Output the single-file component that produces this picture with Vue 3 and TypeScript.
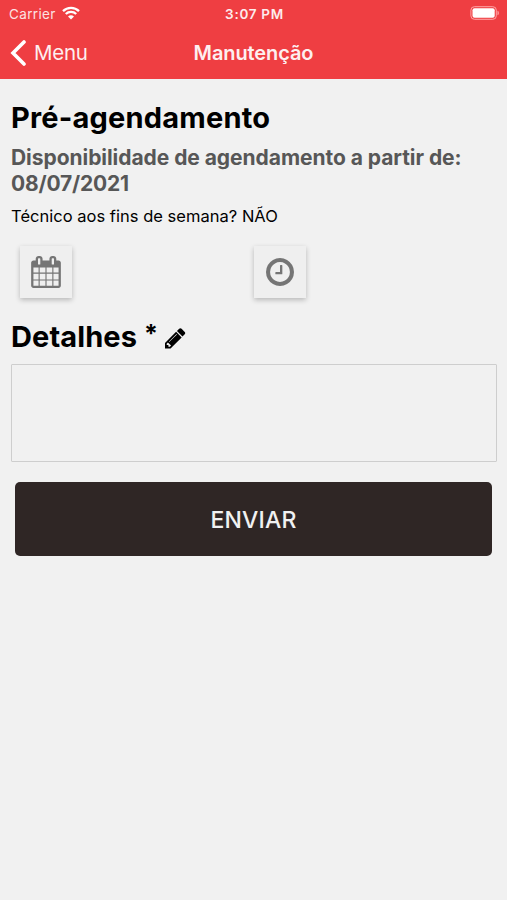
<script setup lang="ts">
import { ref } from 'vue'

const carrier = 'Carrier'
const time = '3:07 PM'
const availableFrom = '08/07/2021'
const weekendTechnician = 'NÃO'
const details = ref('')
</script>

<template>
  <div class="screen">
    <header class="header">
      <div class="status">
        <div class="status-left">
          <span class="carrier">{{ carrier }}</span>
          <svg class="wifi" viewBox="0 0 18 14" aria-hidden="true">
            <path d="M1 5.1a11.4 11.4 0 0 1 16 0" />
            <path d="M3.8 8a7.4 7.4 0 0 1 10.4 0" />
            <path class="wifi-dot" d="M9 13.6 6 10.6a4.3 4.3 0 0 1 6 0z" />
          </svg>
        </div>
        <span class="time">{{ time }}</span>
        <div class="status-right">
          <svg class="battery" viewBox="0 0 30 14" aria-hidden="true">
            <rect class="battery-case" x="0.9" y="0.7" width="25.4" height="12.6" rx="3.5" />
            <rect class="battery-level" x="2.5" y="2.3" width="22.2" height="9.4" rx="2" />
            <path class="battery-tip" d="M27.5 4.7c1.8.5 1.8 4.1 0 4.6z" />
          </svg>
        </div>
      </div>
      <nav class="nav">
        <button class="back" type="button">
          <svg class="chevron" viewBox="0 0 17 26" aria-hidden="true">
            <path d="M14 2 3 13l11 11" />
          </svg>
          <span class="back-label">Menu</span>
        </button>
        <h1 class="nav-title">Manutenção</h1>
      </nav>
    </header>

    <main class="content">
      <h2 class="heading"><span class="schedule-title">Pré-agendamento</span></h2>
      <p class="availability">
        <span class="availability-label">Disponibilidade de agendamento a partir de:</span><br />
        <span class="date">{{ availableFrom }}</span>
      </p>
      <p class="weekend">Técnico aos fins de semana? {{ weekendTechnician }}</p>

      <div class="pickers">
        <div class="picker">
          <button class="tile" type="button" aria-label="Data">
            <svg class="calendar" viewBox="0 0 1664 1792">
              <path d="M128 1664h288v-288h-288v288zm352 0h320v-288h-320v288zm-352-352h288v-320h-288v320zm352 0h320v-320h-320v320zm-352-384h288v-288h-288v288zm736 736h320v-288h-320v288zm-384-736h320v-288h-320v288zm768 736h288v-288h-288v288zm-384-352h320v-320h-320v320zm-352-864v-288q0-13-9.5-22.5t-22.5-9.5h-64q-13 0-22.5 9.5t-9.5 22.5v288q0 13 9.5 22.5t22.5 9.5h64q13 0 22.5-9.5t9.5-22.5zm736 864h288v-320h-288v320zm-384-384h320v-288h-320v288zm384 0h288v-288h-288v288zm32-480v-288q0-13-9.5-22.5t-22.5-9.5h-64q-13 0-22.5 9.5t-9.5 22.5v288q0 13 9.5 22.5t22.5 9.5h64q13 0 22.5-9.5t9.5-22.5zm384-64v1280q0 52-38 90t-90 38h-1408q-52 0-90-38t-38-90v-1280q0-52 38-90t90-38h128v-96q0-66 47-113t113-47h64q66 0 113 47t47 113v96h384v-96q0-66 47-113t113-47h64q66 0 113 47t47 113v96h128q52 0 90 38t38 90z" />
            </svg>
          </button>
        </div>
        <div class="picker">
          <button class="tile" type="button" aria-label="Hora">
            <svg class="clock" viewBox="128 128 1536 1536">
              <path d="M1024 544v448q0 14-9 23t-23 9h-320q-14 0-23-9t-9-23v-64q0-14 9-23t23-9h224v-352q0-14 9-23t23-9h64q14 0 23 9t9 23zm416 352q0-148-73-273t-198-198-273-73-273 73-198 198-73 273 73 273 198 198 273 73 273-73 198-198 73-273zm224 0q0 209-103 385.5t-279.5 279.5-385.5 103-385.5-103-279.5-279.5-103-385.5 103-385.5 279.5-279.5 385.5-103 385.5 103 279.5 279.5 103 385.5z" />
            </svg>
          </button>
        </div>
      </div>

      <h2 class="heading details-heading">
        <span class="details-title">Detalhes <span class="required">*</span></span>
        <svg class="pencil" viewBox="128 128 1536 1536" aria-hidden="true">
          <path d="M491 1536l91-91-235-235-91 91v107h128v128h107zm523-928q0-22-22-22-10 0-17 7l-542 542q-7 7-7 17 0 22 22 22 10 0 17-7l542-542q7-7 7-17zm-54-192l416 416-832 832h-416v-416zm683 96q0 53-37 90l-166 166-416-416 166-165q36-38 90-38 53 0 91 38l235 234q37 39 37 91z" />
        </svg>
      </h2>
      <textarea v-model="details" class="details" aria-label="Detalhes"></textarea>
      <button class="submit" type="button">ENVIAR</button>
    </main>
  </div>
</template>

<style>
body {
  background: #f1f1f1;
}
</style>

<style scoped>
.screen {
  min-height: 900px;
  background: #f1f1f1;
  color: #000;
  font-family: Inter, "Liberation Sans", sans-serif;
}

.screen * {
  box-sizing: border-box;
}

button {
  padding: 0;
  border: 0;
  font-family: inherit;
}

svg {
  display: block;
  flex: none;
}

h1,
h2,
p {
  margin: 0;
}

.header {
  height: 79px;
  background: #ef3e42;
  color: #fff;
}

.status {
  display: grid;
  grid-template-columns: 1fr auto 1fr;
  align-items: center;
  height: 27px;
  padding: 0 7px 0 9px;
}

.status-left {
  display: flex;
  align-items: center;
  gap: 6px;
}

.carrier {
  font-size: 13.5px;
  letter-spacing: 0.35px;
  line-height: 28px;
  opacity: 0.85;
}

.wifi {
  width: 18px;
  height: 14px;
  margin-top: -2px;
  fill: none;
  stroke: #fff;
  stroke-width: 2.3;
}

.wifi .wifi-dot {
  fill: #fff;
  stroke: none;
}

.time {
  font-size: 13.5px;
  font-weight: 600;
  letter-spacing: 0.7px;
  line-height: 28px;
  opacity: 0.9;
}

.status-right {
  display: flex;
  justify-content: flex-end;
}

.battery {
  width: 30px;
  height: 14px;
  margin-top: -2px;
}

.battery-case {
  fill: none;
  stroke: #ffa4a6;
  stroke-width: 1;
}

.battery-level {
  fill: #fff;
}

.battery-tip {
  fill: #ffa4a6;
}

.nav {
  display: grid;
  grid-template-columns: 1fr auto 1fr;
  align-items: center;
  height: 52px;
  padding: 0 10px;
}

.back {
  display: flex;
  align-items: center;
  gap: 7px;
  background: transparent;
  color: #fff;
}

.chevron {
  width: 17px;
  height: 26px;
  fill: none;
  stroke: #fff;
  stroke-width: 3.6;
  stroke-linecap: round;
}

.back-label {
  font-size: 20.5px;
  letter-spacing: -0.25px;
  line-height: 26px;
  opacity: 0.92;
}

.nav-title {
  font-size: 20px;
  font-weight: 600;
  letter-spacing: -0.1px;
  line-height: 26px;
  opacity: 0.92;
}

.content {
  padding: 20px 10px 0 11px;
}

.heading {
  height: 37px;
  font-size: 29px;
  font-weight: 700;
  line-height: 37px;
  white-space: nowrap;
}

.schedule-title {
  letter-spacing: 0.2px;
}

.availability {
  margin-top: 9px;
  color: #575757;
  font-size: 21px;
  font-weight: 700;
  letter-spacing: -0.05px;
  line-height: 26px;
  white-space: nowrap;
}

.date {
  letter-spacing: -0.2px;
}

.weekend {
  margin-top: 7px;
  font-size: 16.5px;
  letter-spacing: 0.02px;
  line-height: 24px;
  white-space: nowrap;
}

.pickers {
  display: grid;
  grid-template-columns: 1fr 1fr;
  margin: 18px 10px 0 9px;
}

.tile {
  display: flex;
  align-items: center;
  justify-content: center;
  width: 52px;
  height: 52px;
  background: #efefef;
  box-shadow: 0 2px 5px rgba(0, 0, 0, 0.24);
}

.tile svg {
  fill: #757575;
}

.calendar {
  width: 30px;
  height: 32px;
}

.clock {
  width: 28px;
  height: 28px;
}

.details-heading {
  display: flex;
  align-items: center;
  gap: 7px;
  margin-top: 20px;
}

.details-title {
  letter-spacing: 0.1px;
}

.required {
  font-size: 25px;
  line-height: 1;
  vertical-align: 4px;
}

.pencil {
  width: 20.5px;
  height: 20.5px;
  margin-top: 3px;
  overflow: visible;
}

.details {
  display: block;
  width: 486px;
  height: 98px;
  margin-top: 9px;
  padding: 10px;
  border: 1px solid #cecece;
  border-radius: 1px;
  outline: none;
  background: transparent;
  font: inherit;
  resize: none;
}

.submit {
  display: block;
  width: 477px;
  height: 74px;
  margin: 20px 0 0 4px;
  padding-top: 2px;
  border-radius: 5px;
  background: #2f2625;
  color: #f1f1f1;
  font-size: 23px;
  font-weight: 500;
  letter-spacing: 0.15px;
}
</style>
